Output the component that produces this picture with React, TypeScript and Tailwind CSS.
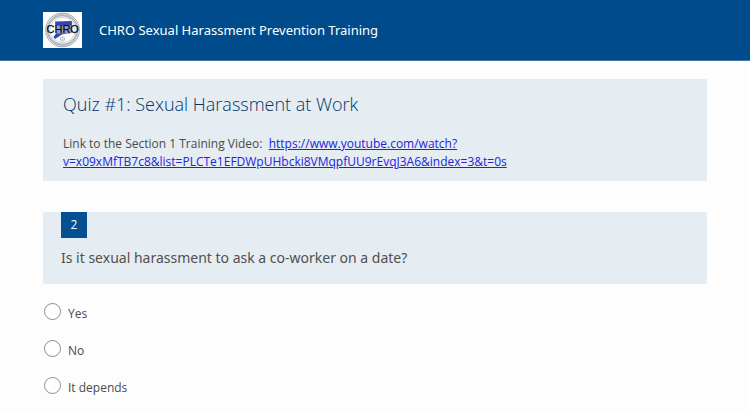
const surveyTitle = "CHRO Sexual Harassment Prevention Training"

const videoUrl = "https://www.youtube.com/watch?v=x09xMfTB7c8&list=PLCTe1EFDWpUHbcki8VMqpfUU9rEvqJ3A6&index=3&t=0s"

const question = {
  number: 2,
  text: "Is it sexual harassment to ask a co-worker on a date?",
  options: ["Yes", "No", "It depends"]
}

function Logo() {
  return (
    <svg viewBox="0 0 39 36" className="w-[39px] h-9 shrink-0" role="img" aria-label="CHRO">
      <rect width="39" height="36" fill="#fdfdfd" />
      <circle cx="19.5" cy="18" r="16.8" fill="#fff" stroke="#7f8b98" strokeWidth="0.8" />
      <circle cx="19.5" cy="18" r="14.8" fill="none" stroke="#c3c8ce" strokeWidth="2.4" />
      <circle cx="19.5" cy="18" r="14.8" fill="none" stroke="#9aa3ad" strokeWidth="1.6" strokeDasharray="0.9 1.1" />
      <circle cx="19.5" cy="18" r="12.7" fill="#fff" stroke="#a9b0b8" strokeWidth="0.6" />
      {/* Connecticut outline */}
      <path d="M12 9.6 L28.8 9 L29.3 20.7 L19 22.4 L12 27 L10.5 25 L13 21.6 Z" fill="#3644ae" />
      <rect x="12.2" y="13.6" width="17.6" height="8" fill="#fff" opacity="0.45" />
      <text x="19.7" y="21.4" textAnchor="middle" fontFamily="Liberation Sans, sans-serif" fontSize="11" fill="#08080e" stroke="#08080e" strokeWidth="0.25">CHRO</text>
      <circle cx="19.5" cy="27" r="2.2" fill="none" stroke="#a5a9b0" strokeWidth="0.7" />
      <path d="M19.5 24.8 V29.2 M17.3 27 H21.7" stroke="#a5a9b0" strokeWidth="0.5" />
    </svg>
  )
}

export default function App() {
  return (
    <div className="min-h-screen bg-[#fdfdfd] font-['Open_Sans','Noto_Sans',sans-serif] text-[#4b4b4b]">
      <header className="flex items-center gap-[17px] bg-[#004b8b] border-b border-[#3f76a8] px-[43px] py-3">
        <Logo />
        <h1 className="font-['Noto_Sans',sans-serif] text-[13px] leading-5 text-white">{surveyTitle}</h1>
      </header>

      <main className="px-[43px] pt-[18px]">
        <section className="bg-[#e5ecf2] px-5 pt-[11px] pb-2.5">
          <h2 className="text-lg leading-7 font-light text-[#003468]">Quiz #1: Sexual Harassment at Work</h2>
          <p className="mt-[17px] text-xs leading-[18px]">
            Link to the Section 1 Training Video:&nbsp;{" "}
            <a href={videoUrl} className="text-[#2323dc] underline">
              https://www.youtube.com/watch?<br />
              v=x09xMfTB7c8&amp;list=PLCTe1EFDWpUHbcki8VMqpfUU9rEvqJ3A6&amp;index=3&amp;t=0s
            </a>
          </p>
        </section>

        <fieldset className="mt-[31px]">
          <legend className="w-full bg-[#e5ecf2] px-[18px] pb-3.5">
            <span className="flex items-center justify-center w-[26px] h-[26px] bg-[#064f90] text-xs text-white">
              {question.number}
            </span>
            <span className="block mt-2 font-['Noto_Sans',sans-serif] text-sm leading-6 text-[#505050]">{question.text}</span>
          </legend>

          <div className="flex flex-col gap-[17px] pt-[19px] px-px">
            {question.options.map((option) => (
              <label key={option} className="flex items-start gap-[7px] text-xs leading-[18px]">
                <input
                  type="radio"
                  name="answer"
                  value={option}
                  className="appearance-none w-[17px] h-[17px] rounded-full border border-[#8c8c8c] bg-white checked:border-4 checked:border-[#064f90]"
                />
                <span className="pt-0.5">{option}</span>
              </label>
            ))}
          </div>
        </fieldset>
      </main>
    </div>
  )
}
